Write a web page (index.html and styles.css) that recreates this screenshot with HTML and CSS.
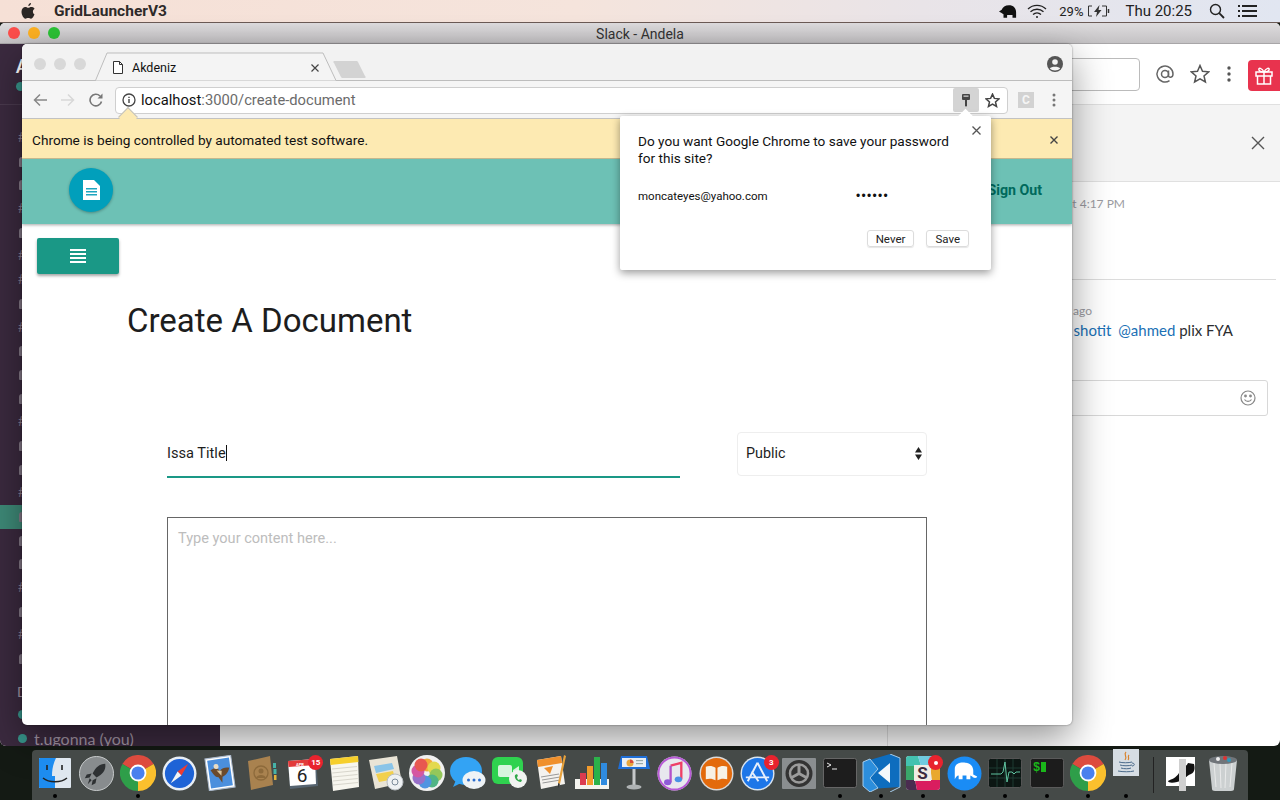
FILE: index.html
```html
<!DOCTYPE html>
<html lang="en">
<head>
<meta charset="utf-8">
<title>Desktop</title>
<link rel="stylesheet" href="styles.css">
</head>
<body>
<svg class="defs" width="0" height="0"><defs>
<symbol id="chrome-logo" viewBox="0 0 36 36">
<path d="M18 18L2.400 9A18 18 0 0 1 33.600 9Z" fill="#dd4b3e"/><path d="M18 18L33.600 9A18 18 0 0 1 18 36Z" fill="#fbc02d"/><path d="M18 18L18 36A18 18 0 0 1 2.400 9Z" fill="#2e9e49"/><circle cx="18" cy="18" r="8.400" fill="#fff"/><circle cx="18" cy="18" r="6.600" fill="#4a80ee"/>
</symbol>
</defs></svg>
<div class="desktop">
  <header class="menubar">
    <svg class="apple" width="14" height="16" viewBox="0 0 14 16"><path d="M10 0c.1 1.300-1.100 2.900-2.700 2.900C7.200 1.500 8.500.2 10 0zM13.500 11.300c-.7 1.800-2.100 4.500-3.500 4.500-1.100 0-1.500-.7-2.800-.7s-1.800.7-2.800.7C2.700 15.800.5 11.900.5 8.800c0-3 2-4.800 3.900-4.800 1.200 0 2.100.8 2.800.8S9 4 10.400 4c.7 0 2.300.2 3.200 1.700-2.400 1.500-2 4.600-.1 5.600z" fill="#2b2624"/></svg>
    <span class="menu-app">GridLauncherV3</span>
    <div class="menu-status">
      <svg class="st-elephant" width="18" height="15" viewBox="0 0 20 16"><path d="M0 8l3-2c1-3 4-5 8-5 5 0 8 3 8 8v6h-4v-3H9v3H5v-4C3 10 2 9 0 8z" fill="#111"/></svg>
      <svg class="st-wifi" width="20" height="15" viewBox="0 0 20 15" fill="none" stroke="#222" stroke-width="1.300"><path d="M1 5a13 13 0 0 1 18 0M3.500 7.800a9.500 9.500 0 0 1 13 0M6 10.500a6 6 0 0 1 8 0"/><circle cx="10" cy="13" r="1" fill="#222" stroke="none"/></svg>
      <span class="st-pct">29%</span>
      <svg class="st-batt" width="24" height="12" viewBox="0 0 24 12" fill="none" stroke="#333"><path d="M5 1H1.500v10H5M15 1h4.500v10H15"/><path d="M21.500 4v4" stroke-width="1.500"/><path d="M12.500 0L7 7h3l-1 5 5.500-7h-3z" fill="#333" stroke="none"/></svg>
      <span class="st-time">Thu 20:25</span>
      <svg class="st-search" width="16" height="16" viewBox="0 0 16 16" fill="none" stroke="#222" stroke-width="1.400"><circle cx="6.500" cy="6.500" r="5"/><path d="M10.200 10.200L15 15" stroke-width="1.800"/></svg>
      <svg class="st-list" width="19" height="12" viewBox="0 0 19 12" fill="#222"><rect y="0" width="2" height="2"/><rect y="5" width="2" height="2"/><rect y="10" width="2" height="2"/><rect x="4" y="0" width="15" height="2"/><rect x="4" y="5" width="15" height="2"/><rect x="4" y="10" width="15" height="2"/></svg>
    </div>
  </header>

  <section class="slack">
    <div class="titlebar">
      <span class="light red"></span><span class="light amber"></span><span class="light green"></span>
      <span class="titlebar-text">Slack - Andela</span>
    </div>
    <div class="slack-body">
      <aside class="slack-side">
        <div class="team"><b class="team-name">A</b><span class="team-dot"></span></div>
        <ul class="channels">
          <li class="ch hash">#</li><li class="ch lock"></li><li class="ch lock"></li><li class="ch hash">#</li><li class="ch lock"></li><li class="ch hash">#</li><li class="ch hash">#</li><li class="ch lock"></li><li class="ch hash">#</li>
          <li class="ch lock"></li><li class="ch lock"></li><li class="ch lock"></li><li class="ch hash">#</li><li class="ch lock"></li><li class="ch lock"></li><li class="ch hash">#</li>
          <li class="ch lock active"></li><li class="ch lock"></li><li class="ch lock"></li><li class="ch hash">#</li><li class="ch lock"></li><li class="ch hash">#</li><li class="ch lock"></li>
        </ul>
        <div class="dm-title">DIRECT</div>
        <div class="dm"><span class="dm-dot"></span>ahmed</div>
        <div class="dm"><span class="dm-dot"></span>t.ugonna (you)</div>
      </aside>
      <div class="slack-center"></div>
      <div class="slack-right">
        <div class="slack-tools">
          <div class="slack-search"></div>
          <svg class="tool-at" width="20" height="20" viewBox="0 0 20 20" fill="none" stroke="#666" stroke-width="1.500"><circle cx="10" cy="10" r="3.500"/><path d="M13.500 6.500v5c0 2.500 4.500 2.500 4.500-1.500a8 8 0 1 0-3.500 6.600"/></svg>
          <svg class="tool-star" width="20" height="20" viewBox="0 0 20 20" fill="none" stroke="#555" stroke-width="1.500"><path d="M10 1.500l2.500 5.700 6.200.6-4.700 4.100 1.400 6.100-5.400-3.200-5.400 3.200L6 11.900 1.300 7.800l6.200-.6z"/></svg>
          <svg class="tool-dots" width="4" height="16" viewBox="0 0 4 16" fill="#555"><circle cx="2" cy="2" r="1.700"/><circle cx="2" cy="8" r="1.700"/><circle cx="2" cy="14" r="1.700"/></svg>
          <div class="tool-gift"><svg width="18" height="18" viewBox="0 0 18 18" fill="none" stroke="#fff" stroke-width="1.500"><rect x="1" y="5" width="16" height="4"/><path d="M2.500 9v8h13V9M9 5v12M9 5C7 1 3 0 4 3c.500 1.500 3 2 5 2zM9 5c2-4 6-5 5-2-.500 1.500-3 2-5 2z"/></svg></div>
        </div>
        <div class="thread-head"><svg width="14" height="14" viewBox="0 0 14 14" stroke="#555" stroke-width="1.400"><path d="M1 1l12 12M13 1L1 13"/></svg></div>
        <div class="msg msg-first"><span class="msg-meta">at 4:17 PM</span></div>
        <div class="msg msg-second">
          <span class="msg-meta meta-ago">ago</span>
          <p class="msg-text"><a class="mention mention-first">shotit</a> <a class="mention">@ahmed</a> plix FYA</p>
        </div>
        <div class="reply">
          <svg width="16" height="16" viewBox="0 0 16 16" fill="none" stroke="#888" stroke-width="1.200"><circle cx="8" cy="8" r="7"/><circle cx="5.500" cy="6" r=".8" fill="#888"/><circle cx="10.500" cy="6" r=".8" fill="#888"/><path d="M4.500 9.500c1.500 2.500 5.500 2.500 7 0"/></svg>
        </div>
      </div>
    </div>
  </section>

  <section class="browser">
    <div class="tabstrip">
      <span class="bdot"></span><span class="bdot"></span><span class="bdot"></span>
      <div class="tab">
        <svg class="tab-shape" width="250" height="29" viewBox="0 0 250 29"><path d="M0 28.500h1.500L13 1h216l13 27.500h8" fill="#f4f4f4" stroke="#bdbdbd"/></svg>
        <svg class="tab-icon" width="10" height="13" viewBox="0 0 10 13" fill="#fff" stroke="#333"><path d="M.5.500h6l3 3v9H.5z"/><path d="M6.500.500v3h3" fill="none"/></svg>
        <span class="tab-title">Akdeniz</span>
        <svg class="tab-x" width="8" height="8" viewBox="0 0 8 8" stroke="#444" stroke-width="1.200"><path d="M.5.500l7 7M7.500.500l-7 7"/></svg>
      </div>
      <svg class="newtab" width="33" height="17" viewBox="0 0 33 17"><path d="M2 0h21a2 2 0 0 1 2 1l7 14a1 1 0 0 1-1 2H10a2 2 0 0 1-2-1L1 2a1 1 0 0 1 1-2z" fill="#d3d3d3"/></svg>
      <svg class="profile" width="16" height="16" viewBox="0 0 16 16"><circle cx="8" cy="8" r="8" fill="#555"/><circle cx="8" cy="6" r="2.800" fill="#f2f2f2"/><path d="M2.800 12.500C4 10 12 10 13.200 12.500 11 15 5 15 2.800 12.500z" fill="#f2f2f2"/></svg>
    </div>
    <div class="toolbar">
      <svg class="tb-back" width="14" height="14" viewBox="0 0 14 14" fill="none" stroke="#888" stroke-width="1.500"><path d="M14 7H1.500M7 1.500L1.500 7 7 12.500"/></svg>
      <svg class="tb-fwd" width="14" height="14" viewBox="0 0 14 14" fill="none" stroke="#d8d8d8" stroke-width="1.500"><path d="M0 7h12.500M7 1.500L12.500 7 7 12.500"/></svg>
      <svg class="tb-reload" width="14" height="14" viewBox="0 0 14 14" fill="none" stroke="#777" stroke-width="1.600"><path d="M12.500 8.500A5.800 5.800 0 1 1 11 3"/><path d="M13.500 .5v5h-5z" fill="#777" stroke="none"/></svg>
      <div class="omnibox">
        <svg class="omni-info" width="14" height="14" viewBox="0 0 14 14" fill="none" stroke="#444" stroke-width="1.300"><circle cx="7" cy="7" r="6"/><path d="M7 6v4M7 3.800v1.300" stroke-width="1.400"/></svg>
        <span class="url"><span class="url-host">localhost</span>:3000/create-document</span>
        <span class="omni-key"><svg width="8" height="13" viewBox="0 0 8 13"><rect width="8" height="6" rx="1" fill="#444"/><rect x="1.500" y="1.500" width="5" height="1.300" fill="#ccc"/><path d="M3 6h2v5.500L4 13l-1-1.500z" fill="#444"/></svg></span>
        <svg class="omni-star" width="15" height="15" viewBox="0 0 20 20" fill="none" stroke="#444" stroke-width="2"><path d="M10 1.500l2.500 5.700 6.200.6-4.700 4.100 1.400 6.100-5.400-3.200-5.400 3.200L6 11.900 1.300 7.800l6.200-.6z"/></svg>
      </div>
      <span class="ext-c">C</span>
      <svg class="tb-menu" width="4" height="14" viewBox="0 0 4 14" fill="#777"><circle cx="2" cy="2" r="1.500"/><circle cx="2" cy="7" r="1.500"/><circle cx="2" cy="12" r="1.500"/></svg>
    </div>
    <div class="infobar">
      <span class="info-arrow"></span>
      <span class="info-text">Chrome is being controlled by automated test software.</span>
      <svg class="info-x" width="8" height="8" viewBox="0 0 8 8" stroke="#444" stroke-width="1.400"><path d="M.5.500l7 7M7.500.500l-7 7"/></svg>
    </div>
    <div class="page">
      <div class="app-head">
        <div class="app-logo"><svg width="17" height="20" viewBox="0 0 17 20"><path d="M0 0h11l6 6v14H0z" fill="#fff"/><path d="M3 8h11v1.500H3zM3 11h11v1.500H3zM3 14h11v1.500H3z" fill="#1ea5bf"/></svg></div>
        <span class="signout">Sign Out</span>
      </div>
      <main class="doc-main">
        <button class="menu-btn"><svg width="16" height="14" viewBox="0 0 16 14" fill="#fff"><rect width="16" height="2"/><rect y="4" width="16" height="2"/><rect y="8" width="16" height="2"/><rect y="12" width="16" height="2"/></svg></button>
        <h1 class="doc-title">Create A Document</h1>
        <div class="doc-row">
          <div class="title-input"><span class="title-val">Issa Title</span><span class="caret"></span></div>
          <div class="access-select"><span>Public</span><svg width="7" height="13" viewBox="0 0 7 13" fill="#222"><path d="M3.500 0L7 5.500H0zM3.500 13L0 7.500h7z"/></svg></div>
        </div>
        <div class="doc-body">Type your content here...</div>
      </main>
    </div>
    <div class="bubble">
      <span class="bubble-arrow"></span>
      <svg class="bubble-x" width="9" height="9" viewBox="0 0 9 9" stroke="#555" stroke-width="1.300"><path d="M.5.500l8 8M8.500.500l-8 8"/></svg>
      <p class="bubble-q">Do you want Google Chrome to save your password for this site?</p>
      <div class="cred"><span class="cred-user">moncateyes@yahoo.com</span><span class="cred-pass">••••••</span></div>
      <div class="bubble-actions"><span class="btn">Never</span><span class="btn">Save</span></div>
    </div>
  </section>

  <nav class="dock">
    <div class="di"><svg width="32" height="30" viewBox="0 0 32 30"><rect width="32" height="30" rx="1" fill="#dfe7ef"/><path d="M0 1a1 1 0 0 1 1-1h16c-3 6-4 12-4 18h3v12H1a1 1 0 0 1-1-1z" fill="#1d8cf0"/><path d="M8 7v5M23 7v5" stroke="#222" stroke-width="1.600"/><path d="M4 20c6 5 18 5 24 0" stroke="#222" stroke-width="1.400" fill="none"/></svg><i class="run"></i></div>
    <div class="di"><svg width="35" height="35" viewBox="0 0 36 36"><circle cx="18" cy="18" r="17.500" fill="#888c8e" stroke="#c9cccd"/><path d="M27 8c-6 0-10 4-13 10l4 4c6-3 10-7 9-14zM13 18l-5 1-2 4 5-1zM18 23l-1 5-4 2 1-5zM11 23l2 2-4 4z" fill="#2e3133"/></svg></div>
    <div class="di"><svg width="36" height="36"><use href="#chrome-logo"/></svg><i class="run"></i></div>
    <div class="di"><svg width="35" height="35" viewBox="0 0 36 36"><circle cx="18" cy="18" r="17.500" fill="#e8eef5"/><circle cx="18" cy="18" r="15" fill="#1e63d6"/><path d="M27 8L16 16l4 4z" fill="#ee3b30"/><path d="M9 28l7-12 4 4z" fill="#f3f3f3"/></svg></div>
    <div class="di"><svg width="32" height="36" viewBox="0 0 32 36"><g transform="rotate(-8 16 18)"><rect x="3" y="2" width="26" height="32" fill="#fff" stroke="#a9b8cb"/><rect x="5" y="4" width="22" height="28" fill="#4b8fdd"/><path d="M7 14c5-3 8-1 9 2 3-3 6-3 10-2-2 5-5 7-8 8l-1 6-3-6c-3 0-5-4-7-8z" fill="#6b4a2c"/><circle cx="13" cy="11" r="2.500" fill="#e8dcc4"/><path d="M13 15l5 1-1 5z" fill="#d9c49c"/></g></svg></div>
    <div class="di"><svg width="32" height="36" viewBox="0 0 32 36"><path d="M2 6L24 1l3 29-22 5z" fill="#a9824f"/><path d="M27 8h3v5h-3zM27.500 14h3v5h-3z" fill="#46b3a8"/><path d="M28 20h2.500v5H28z" fill="#e2b33c"/><circle cx="15" cy="18" r="7" fill="none" stroke="#8d6a3b" stroke-width="1.300"/><circle cx="15" cy="16" r="2.500" fill="#8d6a3b"/><path d="M10 23c1-4 9-4 10 0" fill="#8d6a3b"/></svg></div>
    <div class="di di-badged"><svg width="32" height="34" viewBox="0 0 32 34"><path d="M1 5l28-2 2 27-28 3z" fill="#566470"/><path d="M1 5l27-2 1 25-26 2z" fill="#fff"/><path d="M1 5l27-2 .5 6L1.500 11z" fill="#e23a3a"/><text class="cal-mon" x="9" y="9.500">APR</text><text class="cal-day" x="15" y="26" text-anchor="middle">6</text></svg><span class="badge badge-cal">15</span></div>
    <div class="di"><svg width="30" height="35" viewBox="0 0 30 35"><path d="M1 3l28-3 1 31-26 4z" fill="#f7f6ee"/><path d="M1 3l28-3 .4 6L1.500 9z" fill="#f6cf2c"/><path d="M3 13l25-2.500M3.300 17l25-2.500M3.500 21l25-2.500M3.800 25l25-2.500M4 29l25-2.500" stroke="#d8d6cc"/></svg></div>
    <div class="di"><svg width="36" height="35" viewBox="0 0 36 35"><path d="M1 4l28-4 5 27-27 6z" fill="#e9e4d6"/><path d="M6 10l18-3 2 6-18 4z" fill="#8ac4e8"/><path d="M8 18l17-3 2 8-16 3z" fill="#f2d04e"/><circle cx="27" cy="26" r="8" fill="#eef1f3" stroke="#b7bcc0"/><circle cx="27" cy="26" r="3" fill="none" stroke="#7b8a99"/></svg></div>
    <div class="di"><svg width="36" height="36" viewBox="0 0 36 36"><circle cx="18" cy="18" r="18" fill="#f1f1f1"/><g opacity=".9"><circle cx="18" cy="10" r="6.500" fill="#f3a427"/><circle cx="25" cy="13" r="6.500" fill="#e2d73d"/><circle cx="27" cy="20" r="6.500" fill="#8bc34a"/><circle cx="23" cy="26" r="6.500" fill="#3fae7a"/><circle cx="16" cy="27" r="6.500" fill="#3f8be0"/><circle cx="10" cy="23" r="6.500" fill="#8f63c5"/><circle cx="9" cy="16" r="6.500" fill="#d2479a"/><circle cx="12" cy="10" r="6.500" fill="#e8483f"/></g></svg></div>
    <div class="di"><svg width="36" height="34" viewBox="0 0 36 34"><ellipse cx="16" cy="15" rx="16" ry="14" fill="#33a3f4"/><path d="M6 24L3 31l8-4z" fill="#33a3f4"/><ellipse cx="24" cy="24" rx="11.500" ry="9" fill="#eef3f6"/><circle cx="18.500" cy="24" r="1.500" fill="#2b6fd0"/><circle cx="24" cy="24" r="1.500" fill="#2b6fd0"/><circle cx="29.500" cy="24" r="1.500" fill="#2b6fd0"/></svg></div>
    <div class="di"><svg width="36" height="32" viewBox="0 0 36 32"><rect width="31" height="27" rx="6" fill="#2fd24f"/><rect x="6" y="8" width="14" height="12" rx="2" fill="#d6f5dc"/><path d="M21 13l6-4v10l-6-4z" fill="#d6f5dc"/><circle cx="26" cy="22" r="9" fill="#f1f3f1"/><path d="M23 18c-1 3 2 7 6 7l1-2-2-1-1 1c-1 0-2-2-2-3l1-1-1-2z" fill="#31a84a"/></svg></div>
    <div class="di"><svg width="32" height="36" viewBox="0 0 32 36"><path d="M2 5l24-4 4 28-24 5z" fill="#f4f2ee"/><path d="M2 5l24-4 1 7-24 4z" fill="#f0902c"/><path d="M9 13l9-2-3 8z" fill="#f0902c"/><path d="M6 22l18-3M7 25l18-3M7.500 28l18-3" stroke="#999"/><path d="M29 0l2 1-6 28-2-1z" fill="#e8a23c"/><path d="M23 28l2 1-2 4z" fill="#333"/></svg></div>
    <div class="di"><svg width="34" height="34" viewBox="0 0 34 34"><path d="M0 23h34v10H0z" fill="#f3f3ee"/><rect x="5" y="17" width="6" height="12" fill="#dc3c4f"/><rect x="12" y="10" width="6" height="19" fill="#f29b2c"/><rect x="19" y="1" width="6" height="28" fill="#2cb24a"/><rect x="26" y="7" width="6" height="22" fill="#2f8bdf"/></svg></div>
    <div class="di"><svg width="32" height="34" viewBox="0 0 32 34"><path d="M3 0h26l3 13H0z" fill="#1f6fd8"/><rect x="4" y="2" width="24" height="9" fill="#e9eef3"/><circle cx="12" cy="7" r="3.500" fill="#e8a63c"/><path d="M12 7V3.500A3.500 3.500 0 0 1 15.500 7z" fill="#d84b3c"/><rect x="18" y="4" width="7" height="1.200" fill="#9aa"/><rect x="18" y="7" width="7" height="1.200" fill="#9aa"/><rect x="14.500" y="13" width="3" height="16" fill="#c5c8c9"/><ellipse cx="16" cy="31" rx="7.500" ry="2.500" fill="#aeb2b3"/></svg></div>
    <div class="di"><svg width="35" height="35" viewBox="0 0 36 36"><circle cx="18" cy="18" r="17.500" fill="#e8e8ee"/><circle cx="18" cy="18" r="16.500" fill="none" stroke="#b85ad6" stroke-width="2"/><path d="M14 10l11-3v17" fill="none" stroke="#ef3f66" stroke-width="2.400"/><path d="M14 10v17" stroke="#b450c9" stroke-width="2.400"/><ellipse cx="11" cy="27" rx="3.800" ry="3" fill="#8f5ad8"/><ellipse cx="22" cy="24" rx="3.800" ry="3" fill="#4b91e5"/></svg></div>
    <div class="di"><svg width="35" height="35" viewBox="0 0 36 36"><circle cx="18" cy="18" r="17.500" fill="#d9d9d9"/><circle cx="18" cy="18" r="16" fill="#e36a0c"/><path d="M17 12c-3-2-7-2-10-1v13c3-1 7-1 10 1zM19 12c3-2 7-2 10-1v13c-3-1-7-1-10 1z" fill="#f7f1e5"/></svg></div>
    <div class="di di-badged"><svg width="35" height="35" viewBox="0 0 36 36"><circle cx="18" cy="18" r="17.500" fill="#d9e4ef"/><circle cx="18" cy="18" r="16" fill="#1d76e8"/><path d="M18 7L8 26M18 7l10 19M6 22h24M12 16l7 10" fill="none" stroke="#e5eefb" stroke-width="2"/></svg><span class="badge badge-app">3</span></div>
    <div class="di"><svg width="34" height="31" viewBox="0 0 34 31"><rect width="34" height="31" rx="1" fill="#8a8e90"/><circle cx="17" cy="15.500" r="13.500" fill="#333"/><circle cx="17" cy="15.500" r="9" fill="none" stroke="#9b9b9b" stroke-width="2.500"/><path d="M17 15.500V6M17 15.500L8.800 20M17 15.500L25.200 20" stroke="#9b9b9b" stroke-width="3"/></svg></div>
    <div class="di"><svg width="34" height="30" viewBox="0 0 34 30"><rect x=".5" y=".5" width="33" height="29" rx="2" fill="#1d1d1d" stroke="#666"/><path d="M4 5l4 2-4 2" fill="none" stroke="#eee"/><path d="M9 11h5" stroke="#eee"/></svg><i class="run"></i></div>
    <div class="di"><svg width="39" height="38" viewBox="0 0 39 38"><path d="M1 8v22l7 5L38 33V4L28 0z" fill="#0e6dbe"/><path d="M1 8l7-3 8 10-8 9 8 10-8 4-7-6z" fill="#2c8edc" stroke="#a6cbe8"/><path d="M28 9v20l-12-10z" fill="#f4f8fb"/><path d="M28 0l10 4v29l-10 5" fill="none" stroke="#a6cbe8"/></svg><i class="run"></i></div>
    <div class="di di-badged"><svg width="34" height="34" viewBox="0 0 34 34"><rect width="34" height="34" rx="3" fill="#e8e8e8"/><path d="M0 3a3 3 0 0 1 3-3h9l3 10H0z" fill="#44c2b0"/><path d="M12 0h19l3 3v7H15z" fill="#70cbe0"/><path d="M24 10h10v14h-8z" fill="#e9a82d"/><path d="M0 24h9l2 10H3a3 3 0 0 1-3-3z" fill="#4a2c50"/><path d="M9 24h25v7a3 3 0 0 1-3 3H11z" fill="#d91d5f"/><path d="M0 10h9v14H0z" fill="#3aa76a"/><rect x="8" y="9" width="17" height="16" fill="#f0ece4"/><text class="slack-s" x="16.500" y="23" text-anchor="middle">S</text></svg><span class="badge badge-slack"></span><i class="run"></i></div>
    <div class="di"><svg width="35" height="35" viewBox="0 0 36 36"><circle cx="18" cy="18" r="17.500" fill="#1a8cf5"/><path d="M8 24V13c0-5 6-7 11-6 5 0 8 4 8 8v4l4 2c0 2-4 2-5 0l-2-1v4h-4v-4h-4v4h-4v-4c-2 0-3 2-4 4z" fill="#fff"/></svg><i class="run"></i></div>
    <div class="di"><svg width="34" height="30" viewBox="0 0 34 30"><rect x=".5" y=".5" width="33" height="29" rx="2" fill="#0c1613" stroke="#545454"/><path d="M1 10h32M1 20h32M9 1v28M17 1v28M25 1v28" stroke="#1d3a33"/><path d="M3 16h10l2-2 2-10 2 20 2-10h3l2 2 2-2h4" fill="none" stroke="#5fc3a0"/></svg><i class="run"></i></div>
    <div class="di"><svg width="34" height="30" viewBox="0 0 34 30"><rect x=".5" y=".5" width="33" height="29" rx="2" fill="#1c1c1c" stroke="#5a5a5a"/><text class="iterm-s" x="3" y="13">$</text><rect x="11" y="4" width="5" height="10" fill="#1ab71a"/></svg><i class="run"></i></div>
    <div class="di"><svg width="36" height="36"><use href="#chrome-logo"/></svg><i class="run"></i></div>
    <div class="di di-java"><svg width="26" height="27" viewBox="0 0 26 27"><rect width="26" height="27" fill="#d6dde3"/><path d="M13 3c-3 3 2 4-1 8M16 6c-2 2 1 3-1 5" fill="none" stroke="#d9822b" stroke-width="1.200"/><path d="M6 13c3 1 10 1 13 0M7 16c3 1 9 1 12 0M8 19c3 1 8 1 10 0M5 22c5 1 12 1 16 0M19 14c3 0 3 3 0 3" fill="none" stroke="#4a6a8a"/></svg><i class="run"></i></div>
    <span class="dock-sep"></span>
    <div class="di di-doc"><svg width="30" height="29" viewBox="0 0 30 29"><rect width="29" height="29" fill="#fff"/><path d="M2 24c4-2 8-3 11-8l3-9c3 2 4 3 6-1l6 1c1 4 1 8-3 10-5 2-7 6-14 8-4 1-9 1-9-1z" fill="#111"/></svg><span class="doc-strip"></span></div>
    <div class="di"><svg width="30" height="36" viewBox="0 0 30 36"><path d="M1 5h28l-3 29c0 1-1 2-3 2H7c-2 0-3-1-3-2z" fill="#ccd0d1"/><path d="M6 8l2 24M12 8l1 25M18 8l-1 25M24 8l-2 24" stroke="#e9eaea"/><ellipse cx="15" cy="5" rx="14" ry="4" fill="#70757a"/><circle cx="10" cy="4" r="2" fill="#eee"/><circle cx="17" cy="3" r="2" fill="#d33"/><circle cx="21" cy="5" r="2" fill="#39b"/></svg></div>
  </nav>
</div>
</body>
</html>
```
FILE: styles.css
```css
* { box-sizing: border-box; }
html, body { margin: 0; padding: 0; }
body { width: 1280px; height: 800px; overflow: hidden; font-family: "Roboto", "Liberation Sans", sans-serif; }
.defs { position: absolute; }
.desktop { position: relative; width: 1280px; height: 800px; overflow: hidden; background: #141a14; }

/* menu bar */
.menubar { position: absolute; left: 0; top: 0; width: 1280px; height: 23px; display: flex; align-items: center; background: linear-gradient(90deg, #f6e0d6 0%, #f5e4dc 45%, #e9e4e8 72%, #e1e6f1 100%); border-bottom: 1px solid #6b5a55; }
.apple { margin-left: 21px; flex: none; }
.menu-app { margin-left: 19px; font: 700 15.500px "Roboto", sans-serif; color: #2e2a29; }
.menu-status { margin-left: auto; display: flex; align-items: center; color: #222; font: 14px "Roboto", sans-serif; }
.st-elephant { margin-right: 10px; }
.st-wifi { margin-right: 12px; }
.st-pct { margin-right: 4px; font-size: 13px; }
.st-batt { margin-right: 14px; }
.st-time { margin-right: 17px; font-size: 15px; }
.st-search { margin-right: 13px; }
.st-list { margin-right: 23px; }

/* slack window */
.slack { position: absolute; left: 0; top: 23px; width: 1280px; height: 723px; display: flex; flex-direction: column; border-radius: 5px 5px 6px 6px; overflow: hidden; background: #fff; }
.titlebar { height: 21px; flex: none; position: relative; display: flex; align-items: center; padding-left: 8px; gap: 8px; background: linear-gradient(#dedcde, #c4c2c4); border-bottom: 1px solid #a8a6a8; }
.light { width: 12px; height: 12px; border-radius: 50%; }
.red { background: #fc4e4b; }
.amber { background: #fdb022; }
.green { background: #2bc236; }
.titlebar-text { position: absolute; left: 0; right: 0; top: 3px; text-align: center; font: 14px "Roboto", sans-serif; color: #333; }
.slack-body { flex: 1; display: flex; min-height: 0; }
.slack-side { width: 220px; flex: none; background: #3b2a3f; color: #a497a6; font: 15px "Lato", sans-serif; overflow: hidden; }
.team { height: 61px; padding: 12px 0 0 16px; border-bottom: 1px solid #4a3a4e; display: flex; flex-direction: column; }
.team-name { color: #fff; font-size: 18px; line-height: 20px; }
.team-dot { width: 9px; height: 9px; margin: 6px 0 0 0; border-radius: 50%; background: #38978d; }
.channels { list-style: none; margin: 21px 0 0; padding: 0; height: 551px; }
.ch { height: 23.700px; line-height: 23px; padding-left: 18px; color: #887a8c; font-size: 13px; position: relative; }
.lock::before { content: ""; position: absolute; left: 19px; top: 7px; width: 7px; height: 10px; border-radius: 3px 3px 1px 1px; background: #857a88; }
.active { background: #3e8a78; }
.dm-title { margin: 5px 0 0 17px; height: 20px; line-height: 20px; font-size: 14px; }
.dm { margin-left: 18px; height: 24px; display: flex; align-items: center; gap: 7px; color: #a497a6; font-size: 16px; white-space: nowrap; }
.dm-dot { width: 9px; height: 9px; border-radius: 50%; background: #38978d; flex: none; }
.slack-center { width: 668px; flex: none; background: #fff; border-right: 1px solid #e2e2e2; }
.slack-right { width: 392px; flex: none; display: flex; flex-direction: column; font-family: "Lato", sans-serif; position: relative; padding-top: 61px; }
.slack-tools { position: absolute; right: 0; top: 0; width: 392px; height: 61px; border-bottom: 1px solid #e0e0e0; background: #fff; }
.slack-search { position: absolute; right: 140px; top: 14px; width: 100px; height: 33px; border: 1px solid #bbb; border-radius: 4px; }
.tool-at { position: absolute; left: 267px; top: 20px; }
.tool-star { position: absolute; left: 302px; top: 20px; }
.tool-dots { position: absolute; left: 339px; top: 22px; }
.tool-gift { position: absolute; left: 360px; top: 16px; width: 32px; height: 31px; border-radius: 4px 0 0 4px; background: #e8334e; display: flex; align-items: center; justify-content: center; }
.thread-head { height: 77px; flex: none; display: flex; align-items: center; justify-content: flex-end; padding-right: 15px; background: #f4f4f4; border-bottom: 1px solid #e0e0e0; }
.msg { display: flex; flex-direction: column; align-items: flex-end; }
.msg-first { height: 98px; padding: 14px 151px 0 0; margin-right: 4px; border-bottom: 1px solid #dcdcdc; }
.msg-meta { font-size: 12px; line-height: 15px; color: #9b9ba1; white-space: nowrap; }
.msg-second { padding: 23px 47px 0 0; height: 100px; }
.meta-ago { padding-right: 141px; }
.msg-text { margin: 2px 0 0; font-size: 15px; line-height: 20px; color: #2c2d30; white-space: nowrap; }
.mention { color: #1a70b5; }
.mention-first { margin-right: 3px; }
.reply { margin: 0 12px 0 100px; height: 36px; flex: none; border: 1px solid #d8d8d8; border-radius: 3px; display: flex; align-items: center; justify-content: flex-end; padding-right: 11px; }

/* browser window */
.browser { position: absolute; left: 22px; top: 44px; width: 1050px; height: 681px; display: flex; flex-direction: column; background: #fff; border-radius: 5px; box-shadow: 0 14px 38px rgba(0,0,0,.42), 0 0 2px rgba(0,0,0,.5); }
.tabstrip { height: 37px; flex: none; display: flex; align-items: flex-start; background: #f2f2f2; border-radius: 5px 5px 0 0; border-bottom: 1px solid #bdbdbd; position: relative; padding: 14px 0 0 12px; gap: 8px; }
.bdot { width: 12px; height: 12px; border-radius: 50%; background: #d8d8d8; flex: none; }
.tab { position: absolute; left: 72px; top: 8px; width: 250px; height: 29px; padding-top: 2px; display: flex; align-items: center; }
.tab-shape { position: absolute; left: 0; top: 0; }
.tab-icon { position: relative; margin-left: 19px; flex: none; }
.tab-title { position: relative; margin-left: 9px; width: 179px; flex: none; font: 12.500px "Roboto", sans-serif; color: #111; }
.tab-x { position: relative; flex: none; }
.newtab { position: absolute; left: 311px; top: 17px; }
.profile { position: absolute; left: 1025px; top: 12px; }
.toolbar { height: 38px; flex: none; display: flex; align-items: center; background: #f5f5f5; border-bottom: 1px solid #c2c2c2; position: relative; padding-top: 1px; }
.tb-back { margin-left: 11px; }
.tb-fwd { margin-left: 14px; }
.tb-reload { margin-left: 14px; }
.omnibox { margin-left: 12px; width: 893px; height: 27px; flex: none; display: flex; align-items: center; background: #fff; border: 1px solid #cfcfcf; border-radius: 4px; }
.omni-info { margin-left: 6px; }
.url { margin-left: 5px; font: 14.750px "Roboto", sans-serif; color: #6b6b6b; }
.url-host { color: #111; }
.omni-key { margin-left: auto; width: 26px; height: 24px; background: #d4d4d4; display: flex; align-items: center; justify-content: center; border-radius: 2px; }
.omni-star { margin: 0 7px 0 6px; }
.ext-c { margin-left: 10px; width: 16px; height: 16px; background: #d2d2d2; color: #f5f5f5; font: 700 12px/16px "Roboto", sans-serif; text-align: center; }
.tb-menu { margin-left: 18px; }
.infobar { height: 40px; flex: none; display: flex; align-items: center; justify-content: space-between; padding: 3px 14px 0 10px; background: #fdeab2; border-bottom: 1px solid #c4b88f; position: relative; }
.info-arrow { position: absolute; left: 99px; top: -9px; width: 14px; height: 14px; background: #fdeab2; border-left: 1px solid #c2c2c2; border-top: 1px solid #c2c2c2; transform: rotate(45deg); }
.info-text { font: 13.650px "Roboto", sans-serif; color: #111; position: relative; }
.page { flex: 1; min-height: 0; overflow: hidden; display: flex; flex-direction: column; border-radius: 0 0 5px 5px; }
.app-head { height: 65px; flex: none; display: flex; align-items: center; justify-content: space-between; padding: 0 30px 4px 47px; background: #6dc1b5; box-shadow: 0 1px 3px rgba(0,0,0,.35); position: relative; z-index: 1; }
.app-logo { width: 44px; height: 44px; border-radius: 50%; background: #019fbb; display: flex; align-items: center; justify-content: center; box-shadow: 0 1px 3px rgba(0,0,0,.3); }
.signout { font: 700 14.200px "Roboto", sans-serif; color: #00695c; }
.doc-main { flex: 1; min-height: 0; overflow: hidden; padding: 14px 0 0 15px; display: flex; flex-direction: column; align-items: flex-start; }
.menu-btn { width: 82px; height: 36px; flex: none; border: 0; border-radius: 2px; background: #1a9886; display: flex; align-items: center; justify-content: center; box-shadow: 0 2px 3px rgba(0,0,0,.35); padding: 0; }
.doc-title { margin: 26px 0 0 90px; font: 400 33px/42px "Roboto", sans-serif; color: #1d1d1d; }
.doc-row { margin: 90px 0 0 130px; display: flex; align-items: flex-start; gap: 57px; flex: none; }
.title-input { width: 513px; height: 46px; padding-bottom: 2px; border-bottom: 2px solid #1a9886; display: flex; align-items: center; font: 14.600px "Roboto", sans-serif; color: #1d1d1d; }
.caret { width: 1px; height: 16px; background: #111; }
.access-select { width: 190px; height: 44px; border: 1px solid #eee; border-radius: 4px; display: flex; align-items: center; justify-content: space-between; padding: 0 4px 2px 8px; font: 14.300px "Roboto", sans-serif; color: #1d1d1d; }
.doc-body { margin: 39px 0 0 130px; width: 760px; height: 400px; flex: none; border: 1px solid #666; padding: 12px 10px; font: 14.550px "Roboto", sans-serif; color: #bdbdbd; }

/* save password bubble */
.bubble { position: absolute; left: 598px; top: 72px; width: 371px; height: 154px; padding: 17px 18px 0; background: #fff; border-radius: 2px; box-shadow: 0 3px 8px rgba(0,0,0,.4); z-index: 3; font-family: "Roboto", sans-serif; color: #111; }
.bubble-arrow { position: absolute; left: 340px; top: -5px; width: 11px; height: 11px; background: #fff; transform: rotate(45deg); }
.bubble-x { position: absolute; left: 352px; top: 10px; }
.bubble-q { margin: 0; width: 330px; font-size: 13.600px; line-height: 17px; }
.cred { margin-top: 21px; display: flex; align-items: center; font-size: 11.500px; height: 16px; }
.cred-user { width: 218px; }
.cred-pass { font-size: 12px; letter-spacing: 1.300px; font-family: "Liberation Sans", sans-serif; }
.bubble-actions { margin-top: 26px; padding-right: 4px; display: flex; justify-content: flex-end; gap: 12px; }
.btn { height: 17px; padding: 0 8px; display: flex; align-items: center; border: 1px solid #dcdcdc; border-radius: 3px; font-size: 11.500px; color: #222; box-shadow: 0 1px 1px rgba(0,0,0,.1); }

/* dock */
.dock { position: absolute; left: 32px; top: 750px; width: 1216px; height: 50px; display: flex; align-items: flex-start; padding-left: 2.500px; background: #454a48; border-radius: 4px 4px 0 0; }
.di { width: 41.320px; height: 50px; flex: none; position: relative; display: flex; align-items: center; justify-content: center; padding-bottom: 4px; overflow: visible; }
.run { position: absolute; left: 50%; margin-left: -2px; top: 44px; width: 4px; height: 4px; border-radius: 50%; background: #000; }
.badge { position: absolute; border-radius: 50%; background: #e8232e; color: #fff; font: 700 8px/15px "Roboto", sans-serif; text-align: center; width: 15px; height: 15px; }
.badge-cal { left: 26px; top: 5px; }
.badge-app { left: 27px; top: 5px; }
.badge-slack { left: 26px; top: 5px; }
.badge-slack::after { content: ""; position: absolute; left: 5.500px; top: 5.500px; width: 4px; height: 4px; border-radius: 50%; background: #fff; }
.di-java { width: 35px; padding-bottom: 25px; }
.di-doc { padding-bottom: 8px; }
.dock-sep { width: 1px; height: 36px; margin: 7px 7px 0 9px; background: #222; flex: none; }
.doc-strip { position: absolute; left: 18px; top: 9px; width: 7px; height: 32px; background: #cfcfcf; }
.cal-mon { font: 700 4px "Roboto", sans-serif; fill: #fff; }
.cal-day { font: 400 19px "Roboto", sans-serif; fill: #222; }
.slack-s { font: 700 17px "Roboto", sans-serif; fill: #3c2a3f; }
.iterm-s { font: 700 12px "Liberation Mono", monospace; fill: #1ab71a; }
```
